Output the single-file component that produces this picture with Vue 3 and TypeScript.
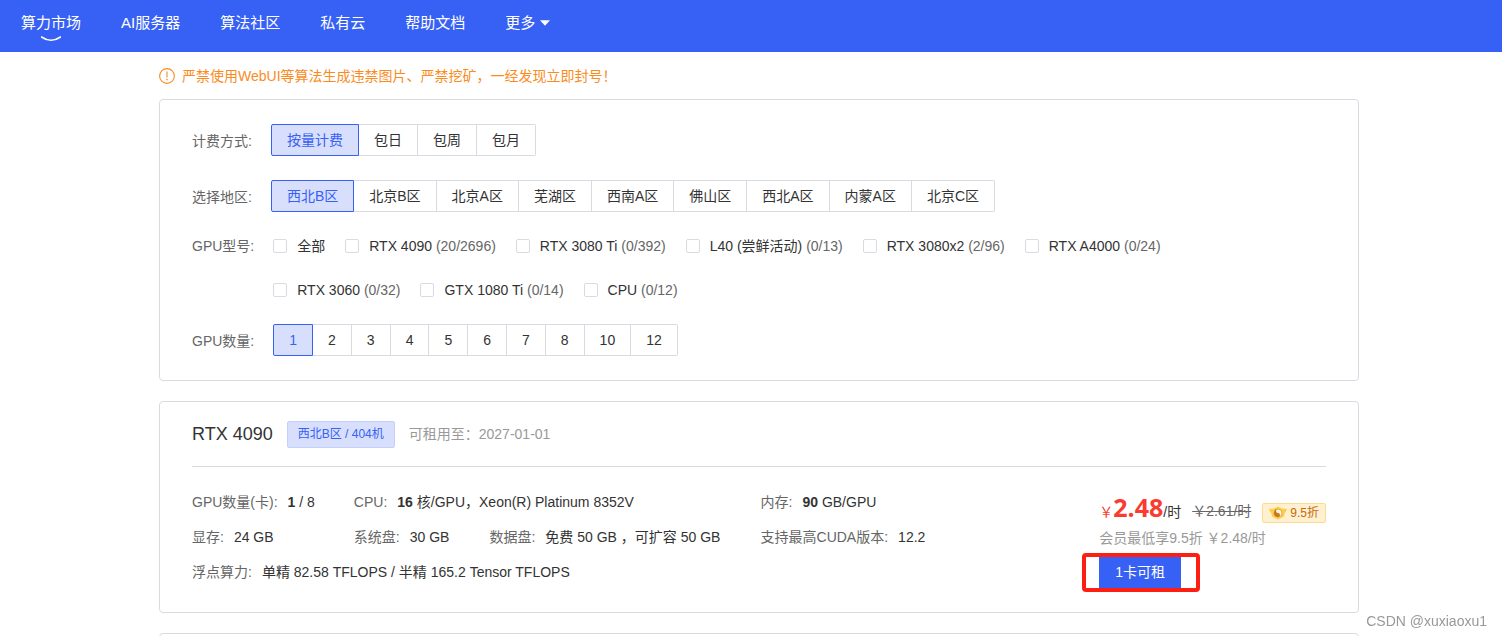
<script setup lang="ts">
import { ref } from 'vue'

interface GpuModel {
  name: string
  count?: string
}

const navItems: string[] = ['算力市场', 'AI服务器', '算法社区', '私有云', '帮助文档']
const billing: string[] = ['按量计费', '包日', '包周', '包月']
const regions: string[] = ['西北B区', '北京B区', '北京A区', '芜湖区', '西南A区', '佛山区', '西北A区', '内蒙A区', '北京C区']
const counts: string[] = ['1', '2', '3', '4', '5', '6', '7', '8', '10', '12']
const models: GpuModel[] = [
  { name: '全部' },
  { name: 'RTX 4090', count: '(20/2696)' },
  { name: 'RTX 3080 Ti', count: '(0/392)' },
  { name: 'L40 (尝鲜活动)', count: '(0/13)' },
  { name: 'RTX 3080x2', count: '(2/96)' },
  { name: 'RTX A4000', count: '(0/24)' },
  { name: 'RTX 3060', count: '(0/32)' },
  { name: 'GTX 1080 Ti', count: '(0/14)' },
  { name: 'CPU', count: '(0/12)' },
]

const selectedBilling = ref('按量计费')
const selectedRegion = ref('西北B区')
const selectedCount = ref('1')
const selectedModels = ref<string[]>([])
</script>

<template>
  <div class="page">
    <header class="topbar">
      <nav class="nav">
        <a v-for="(item, i) in navItems" :key="item" href="#" class="nav-link">
          {{ item }}
          <svg v-if="i === 0" class="smile" width="20" height="6" viewBox="0 0 20 6" aria-hidden="true">
            <path d="M0.5 1 Q10 7.6 19.5 1" fill="none" stroke="#fff" stroke-width="1.6" stroke-linecap="round" />
          </svg>
        </a>
        <button type="button" class="nav-link nav-more">
          更多
          <svg width="10" height="6" viewBox="0 0 10 6" aria-hidden="true"><path d="M0 0.3H10L5 5.8Z" fill="#fff" /></svg>
        </button>
      </nav>
    </header>

    <main class="content">
      <p class="notice">
        <svg width="16" height="16" viewBox="0 0 16 16" aria-hidden="true">
          <circle cx="8" cy="8" r="7.4" fill="none" stroke="#fa8c1e" stroke-width="1.1" />
          <path d="M8 3.6V9.6" stroke="#fa8c1e" stroke-width="1.1" />
          <circle cx="8" cy="11.6" r="0.8" fill="#fa8c1e" />
        </svg>
        <span>严禁使用WebUI等算法生成违禁图片、严禁挖矿，一经发现立即封号！</span>
      </p>

      <section class="card filters">
        <div class="filter-row" role="radiogroup" aria-labelledby="lbl-billing">
          <span id="lbl-billing" class="filter-label">计费方式:</span>
          <div class="segments">
            <label v-for="b in billing" :key="b" class="segment" :class="{ active: b === selectedBilling }">
              <input v-model="selectedBilling" type="radio" name="billing" :value="b" />{{ b }}
            </label>
          </div>
        </div>
        <div class="filter-row" role="radiogroup" aria-labelledby="lbl-region">
          <span id="lbl-region" class="filter-label">选择地区:</span>
          <div class="segments">
            <label v-for="r in regions" :key="r" class="segment" :class="{ active: r === selectedRegion }">
              <input v-model="selectedRegion" type="radio" name="region" :value="r" />{{ r }}
            </label>
          </div>
        </div>
        <div class="filter-row" role="group" aria-labelledby="lbl-model">
          <span id="lbl-model" class="filter-label compact">GPU型号:</span>
          <div class="checks">
            <label v-for="m in models" :key="m.name" class="check">
              <input v-model="selectedModels" type="checkbox" :value="m.name" />
              <span>{{ m.name }} <span v-if="m.count" class="muted">{{ m.count }}</span></span>
            </label>
          </div>
        </div>
        <div class="filter-row" role="radiogroup" aria-labelledby="lbl-count">
          <span id="lbl-count" class="filter-label">GPU数量:</span>
          <div class="segments">
            <label v-for="c in counts" :key="c" class="segment" :class="{ active: c === selectedCount }">
              <input v-model="selectedCount" type="radio" name="count" :value="c" />{{ c }}
            </label>
          </div>
        </div>
      </section>

      <section class="card machine">
        <div class="machine-head">
          <h2>RTX 4090</h2>
          <span class="tag">西北B区 / 404机</span>
          <span class="until">可租用至：2027-01-01</span>
        </div>
        <div class="machine-body">
          <div class="specs">
            <div class="spec"><span class="key">GPU数量(卡):</span><span><b>1</b> / 8</span></div>
            <div class="spec"><span class="key">CPU:</span><span><b>16</b> 核/GPU，Xeon(R) Platinum 8352V</span></div>
            <div class="spec"><span class="key">内存:</span><span><b>90</b> GB/GPU</span></div>
            <div class="spec"><span class="key">显存:</span><span>24 GB</span></div>
            <div class="spec-pair">
              <div class="spec"><span class="key">系统盘:</span><span>30 GB</span></div>
              <div class="spec"><span class="key">数据盘:</span><span>免费 50 GB ，可扩容 50 GB</span></div>
            </div>
            <div class="spec"><span class="key">支持最高CUDA版本:</span><span>12.2</span></div>
            <div class="spec wide"><span class="key">浮点算力:</span><span>单精 82.58 TFLOPS / 半精 165.2 Tensor TFLOPS</span></div>
          </div>
          <div class="pricing">
            <div class="price-line">
              <span class="price"><span class="yen">￥</span><strong>2.48</strong>/时</span>
              <s>￥2.61/时</s>
              <span class="discount">
                <svg width="18" height="14" viewBox="0 0 18 14" aria-hidden="true">
                  <path d="M0 3L5 2.6L9 0.4L13 2.6L18 3L16.6 6.4H15.8L15 10.4L9 13.6L3 10.4L2.2 6.4H1.4Z" fill="#fbcf4b" />
                  <circle cx="9" cy="7" r="4" fill="#fff6e0" stroke="#e8a23c" stroke-width="0.9" />
                  <path d="M9 3A4 4 0 0 0 9 11A2 2 0 0 0 9 7A2 2 0 0 1 9 3Z" fill="#c9761f" />
                </svg>
                9.5折
              </span>
            </div>
            <div class="member">会员最低享9.5折 ￥2.48/时</div>
            <div class="rent-wrap">
              <button type="button" class="rent">1卡可租</button>
            </div>
          </div>
        </div>
      </section>

      <section class="card next-card"></section>
    </main>

    <span class="watermark">CSDN @xuxiaoxu1</span>
  </div>
</template>

<style>
body {
  margin: 0;
  background: #fff;
}
</style>

<style scoped>
.page {
  height: 100vh;
  overflow: hidden;
  font-family: "Liberation Sans", Arial, "Noto Sans CJK SC", sans-serif;
  font-size: 14px;
  line-height: 20px;
  color: #333;
}
.page * {
  box-sizing: border-box;
}
.topbar {
  height: 52px;
  background: #3761f5;
}
.nav {
  display: flex;
  gap: 40px;
  padding: 12px 21px 0;
}
.nav-link {
  position: relative;
  font-size: 15px;
  line-height: 22px;
  color: #fff;
  text-decoration: none;
  white-space: nowrap;
}
.smile {
  position: absolute;
  left: 50%;
  top: 24px;
  margin-left: -10px;
}
.nav-more {
  display: flex;
  align-items: center;
  gap: 5px;
  padding: 0;
  border: 0;
  background: none;
  font-family: inherit;
}
.content {
  max-width: 1216px;
  box-sizing: border-box;
  margin: 0 auto;
  padding-left: 16px;
}
.page {
  padding-left: 0;
}
.content {
  width: 100%;
  transform: none;
}
.notice {
  display: flex;
  align-items: center;
  gap: 7px;
  height: 47px;
  margin: 0;
  color: #fa8c1e;
}
.card {
  border: 1px solid #d9dbe2;
  border-radius: 4px;
  background: #fff;
  margin-bottom: 20px;
}
.filters {
  display: flex;
  flex-direction: column;
  gap: 24px;
  padding: 24px 32px;
}
.filter-row {
  display: flex;
  align-items: flex-start;
  gap: 19px;
}
.filter-label {
  flex: none;
  line-height: 34px;
  height: 32px;
  color: #666;
}
.filter-label.compact {
  line-height: 20px;
  height: 20px;
}
.segments {
  display: flex;
  flex-wrap: wrap;
}
.segment {
  height: 32px;
  padding: 0 15px;
  border: 1px solid #d9dbe2;
  border-left-width: 0;
  line-height: 30px;
  cursor: pointer;
}
.segment:first-child {
  border-left-width: 1px;
  border-radius: 2px 0 0 2px;
}
.segment:last-child {
  border-radius: 0 2px 2px 0;
}
.segment.active {
  border-color: #3761f5;
  background: #d8dffd;
  color: #3761f5;
}
.segment input {
  appearance: none;
  position: absolute;
  width: 0;
  height: 0;
  margin: 0;
}
.checks {
  display: flex;
  flex-wrap: wrap;
  row-gap: 24px;
}
.check {
  display: flex;
  align-items: center;
  gap: 10px;
  margin-right: 20px;
  cursor: pointer;
}
.check input {
  appearance: none;
  width: 14px;
  height: 14px;
  margin: 0;
  border: 1px solid #d9dbe2;
  border-radius: 2px;
  background: #fff;
}
.check input:checked {
  background: #3761f5;
}
.muted,
.key {
  color: #666;
}
.machine {
  padding: 0 32px 23px;
}
.machine-head {
  display: flex;
  align-items: center;
  gap: 14px;
  height: 65px;
  border-bottom: 1px solid #d9dbe2;
}
.machine-head h2 {
  margin: 0;
  font-size: 18px;
  font-weight: 400;
}
.tag {
  padding: 0 10px;
  border: 1px solid #c3cffc;
  border-radius: 2px;
  background: #d8dffd;
  color: #3761f5;
  font-size: 12px;
  line-height: 25px;
}
.until,
.member {
  color: #999;
}
.machine-body {
  display: flex;
  padding-top: 17px;
}
.specs {
  flex: 1;
  display: grid;
  grid-template-columns: 162fr 407fr 339fr;
  grid-auto-rows: 35px;
  align-items: center;
}
.spec {
  display: flex;
  gap: 10px;
  white-space: nowrap;
}
.spec-pair {
  display: flex;
  gap: 40px;
}
.wide {
  grid-column: 1 / -1;
}
.pricing {
  flex: none;
  padding-top: 10px;
}
.price-line {
  display: flex;
  align-items: center;
  gap: 11px;
  height: 34px;
}
.price {
  padding-bottom: 4px;
  white-space: nowrap;
}
.yen,
.price strong {
  color: #fb3b2f;
}
.price strong {
  font-family: "Open Sans", "Noto Sans", sans-serif;
  font-size: 25px;
}
s {
  color: #666;
}
.discount {
  display: flex;
  align-items: center;
  gap: 3px;
  height: 20px;
  margin-top: 4px;
  padding: 0 6px;
  border: 1px solid #fddc92;
  border-radius: 2px;
  background: #fff1cf;
  color: #c4690f;
  font-size: 12px;
}
.rent-wrap {
  position: relative;
  width: fit-content;
  margin-top: 9px;
}
.rent-wrap::after {
  content: "";
  position: absolute;
  inset: -4px -19px -4px -17px;
  border: 4px solid #ff1f12;
  border-radius: 4px;
  pointer-events: none;
}
.rent {
  display: block;
  height: 31px;
  padding: 0 16px 3px;
  border: 0;
  background: #3761f5;
  color: #fff;
  font-family: inherit;
  font-size: 14px;
}
.next-card {
  min-height: 212px;
}
.watermark {
  position: fixed;
  right: 15px;
  bottom: 5px;
  color: #999;
}
</style>
